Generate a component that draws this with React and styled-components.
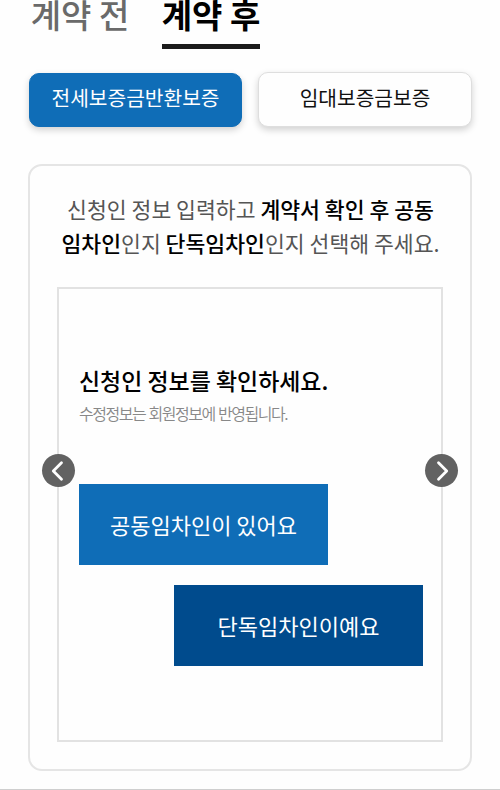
import React from "react";
import styled, { createGlobalStyle } from "styled-components";

const GlobalStyle = createGlobalStyle`
  * { box-sizing: border-box; }
  html, body { margin: 0; padding: 0; background: #fefefe; }
  body { overflow: hidden; }
  button { font: inherit; margin: 0; cursor: pointer; }
`;

const Page = styled.main`
  width: 500px;
  height: 790px;
  display: flex;
  flex-direction: column;
  background: #fefefe;
  border-bottom: 1px solid #cfcfcf;
  font-family: "Noto Sans CJK KR", "Noto Sans", sans-serif;
  white-space: nowrap;
`;

const Tabs = styled.nav`
  display: flex;
  gap: 33px;
  height: 49px;
  padding-left: 31px;
`;

const Tab = styled.button`
  width: 98px;
  height: 49px;
  padding: 0 0 16px;
  display: flex;
  justify-content: center;
  align-items: center;
  border: 0;
  border-bottom: 5px solid ${(p) => (p.$active ? "#1b1b1b" : "transparent")};
  background: none;
  color: ${(p) => (p.$active ? "#000" : "#6a6a6a")};
  && {
    font-size: 33px;
    font-weight: ${(p) => (p.$active ? 700 : 500)};
    line-height: 28px;
  }
`;

const Options = styled.div`
  display: grid;
  grid-template-columns: 213px 214px;
  gap: 16px;
  margin: 23px 0 0 29px;
`;

const Option = styled.button`
  height: ${(p) => (p.$selected ? "54px" : "55px")};
  margin-top: ${(p) => (p.$selected ? "1px" : "0")};
  padding: 0 0 ${(p) => (p.$selected ? "6px" : "5px")};
  border: 1px solid ${(p) => (p.$selected ? "#0f6db7" : "#dedede")};
  border-radius: 10px;
  background: ${(p) => (p.$selected ? "#0f6db7" : "#fefefe")};
  color: ${(p) => (p.$selected ? "#fff" : "#111")};
  box-shadow: 0 3px 7px rgba(0, 0, 0, 0.18);
  && {
    font-size: 20.3px;
    line-height: 30px;
  }
`;

const Card = styled.section`
  width: 444px;
  height: 607px;
  margin: 37px 0 0 28px;
  padding: 26px 27px 0;
  display: flex;
  flex-direction: column;
  align-items: center;
  border: 2px solid #e5e5e5;
  border-radius: 14px;
`;

const Guide = styled.p`
  margin: 0;
  padding-left: 1px;
  color: #555;
  font-size: 21.6px;
  line-height: 33.5px;
  text-align: center;

  strong {
    color: #000;
    font-weight: 500;
  }
`;

const Slide = styled.div`
  position: relative;
  width: 386px;
  height: 455px;
  margin-top: 28px;
  padding: 74px 18px 0 20px;
  display: flex;
  flex-direction: column;
  border: 2px solid #e2e2e2;
`;

const Title = styled.h2`
  margin: 0;
  color: #000;
  font-size: 22.95px;
  font-weight: 500;
  line-height: 35px;
`;

const Note = styled.p`
  margin: 2px 0 0;
  color: #888;
  font-size: 16px;
  font-weight: 350;
  line-height: 26px;
  letter-spacing: -1.45px;
  word-spacing: 1px;
`;

const Choices = styled.div`
  display: flex;
  flex-direction: column;
  gap: 20px;
  margin-top: 58px;
`;

const Choice = styled.button`
  width: 249px;
  height: 81px;
  padding: 0 0 2px;
  align-self: ${(p) => (p.$alone ? "flex-end" : "flex-start")};
  border: 0;
  background: ${(p) => (p.$alone ? "#004b8d" : "#0f6db7")};
  color: #fff;
  && {
    font-size: 22px;
    font-weight: 400;
  }
`;

const Arrow = styled.button`
  position: absolute;
  top: 165px;
  ${(p) => (p.$side === "left" ? "left: -17px;" : "right: -17px;")}
  width: 33px;
  height: 33px;
  padding: 0;
  border: 0;
  border-radius: 50%;
  background: #626262;

  svg {
    display: block;
  }
`;

function Chevron({ d }) {
  return (
    <svg width="33" height="33" viewBox="0 0 33 33" fill="none" stroke="#fff" strokeWidth="2.8" strokeLinecap="round" strokeLinejoin="round">
      <path d={d} />
    </svg>
  );
}

export default function App() {
  return (
    <>
      <GlobalStyle />
      <Page>
        <Tabs>
          <Tab>계약 전</Tab>
          <Tab $active>계약 후</Tab>
        </Tabs>
        <Options>
          <Option $selected>전세보증금반환보증</Option>
          <Option>임대보증금보증</Option>
        </Options>
        <Card>
          <Guide>
            신청인 정보 입력하고 <strong>계약서 확인 후 공동</strong>
            <br />
            <strong>임차인</strong>인지 <strong>단독임차인</strong>인지 선택해 주세요.
          </Guide>
          <Slide>
            <Title>신청인 정보를 확인하세요.</Title>
            <Note>수정정보는 회원정보에 반영됩니다.</Note>
            <Choices>
              <Choice>공동임차인이 있어요</Choice>
              <Choice $alone>단독임차인이예요</Choice>
            </Choices>
            <Arrow $side="left" aria-label="이전">
              <Chevron d="M19.5 8.7L11.3 17l8.2 8.3" />
            </Arrow>
            <Arrow $side="right" aria-label="다음">
              <Chevron d="M13.5 8.7L21.7 17l-8.2 8.3" />
            </Arrow>
          </Slide>
        </Card>
      </Page>
    </>
  );
}
